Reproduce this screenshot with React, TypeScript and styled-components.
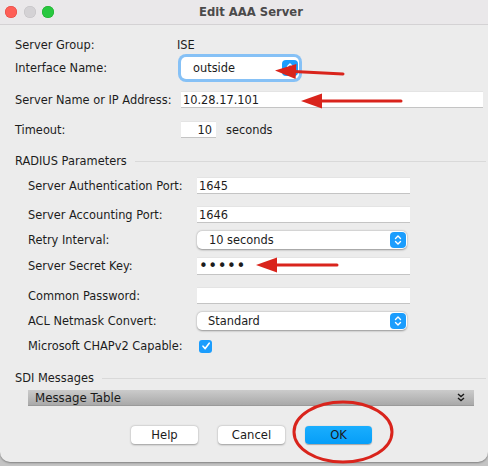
import React from "react";
import styled, { createGlobalStyle } from "styled-components";

const GlobalStyle = createGlobalStyle`
  html, body {
    margin: 0;
    padding: 0;
    background: #c4c4c4;
  }
  body {
    font-family: "DejaVu Sans", "Liberation Sans", sans-serif;
    font-size: 11.4px;
    color: #1c1c1c;
  }
`;

const Page = styled.div`
  position: relative;
  width: 488px;
  height: 466px;
  overflow: hidden;
`;

const Window = styled.div`
  height: 462px;
  background: #ececec;
  border-bottom-left-radius: 10px;
  border-bottom-right-radius: 10px;
  box-shadow: 0 1px 2px rgba(0, 0, 0, 0.35);
  display: flex;
  flex-direction: column;
`;

const TitleBar = styled.div`
  height: 24px;
  flex: none;
  display: flex;
  align-items: center;
  background: #eae8ea;
  border-bottom: 1px solid #d4d2d4;
`;

const Lights = styled.div`
  display: flex;
  gap: 6.5px;
  padding-left: 5px;
  width: 49px;
`;

const Light = styled.span<{ $c: string; $b: string }>`
  width: 12px;
  height: 12px;
  border-radius: 50%;
  background: ${(p) => p.$c};
  box-shadow: inset 0 0 0 0.5px ${(p) => p.$b};
`;

const Title = styled.div`
  flex: 1;
  text-align: center;
  padding-right: 40px;
  font-weight: bold;
  font-size: 11.6px;
  color: #4b4a4b;
`;

const Body = styled.div`
  padding: 8px 5px 0 15px;
  display: flex;
  flex-direction: column;
`;

const Row = styled.div<{ $h: number; $mt?: number; $indent?: number }>`
  display: flex;
  align-items: center;
  height: ${(p) => p.$h}px;
  margin-top: ${(p) => p.$mt ?? 0}px;
  padding-left: ${(p) => p.$indent ?? 0}px;
`;

const Label = styled.span<{ $w: number }>`
  width: ${(p) => p.$w}px;
  flex: none;
  white-space: nowrap;
`;

const TextField = styled.div<{ $w?: number; $align?: string }>`
  height: 100%;
  ${(p) => (p.$w ? `width: ${p.$w}px; flex: none;` : "flex: 1;")}
  box-sizing: border-box;
  background: #fff;
  border-top: 1px solid #e4e4e4;
  border-bottom: 1px solid #c4c4c4;
  display: flex;
  align-items: center;
  justify-content: ${(p) => p.$align ?? "flex-start"};
  padding: 0 4px 0 2px;
  white-space: nowrap;
`;

const Dots = styled.span`
  font-size: 15px;
  letter-spacing: 0.5px;
  line-height: 1;
`;

const Select = styled.div<{ $w: number; $pl: number }>`
  width: ${(p) => p.$w}px;
  height: 100%;
  box-sizing: border-box;
  background: #fff;
  border-radius: 5px;
  box-shadow: 0 0.5px 2px rgba(0, 0, 0, 0.38);
  display: flex;
  align-items: center;
  justify-content: space-between;
  padding: 0 1px 0 ${(p) => p.$pl}px;
`;

const FocusSelect = styled(Select)`
  box-shadow: 0 0 0 3px #86c1f6, 0 0 0 1px #5aa8f0;
`;

const Stepper = styled.span`
  width: 16px;
  height: 16px;
  border-radius: 4px;
  background: #1b9dfd;
  display: flex;
  align-items: center;
  justify-content: center;
`;

const Unit = styled.span`
  margin-left: 10px;
`;

const Section = styled.div<{ $mt: number }>`
  display: flex;
  align-items: center;
  height: 18px;
  margin-top: ${(p) => p.$mt}px;
  margin-right: -3px;
`;

const SectionLine = styled.span`
  flex: 1;
  height: 1px;
  margin-left: 8px;
  background: #d9d9d9;
`;

const Check = styled.span`
  width: 13px;
  height: 13px;
  margin-left: 2px;
  border-radius: 3px;
  background: #1b9dfd;
  display: flex;
  align-items: center;
  justify-content: center;
`;

const TableBar = styled.div`
  height: 16px;
  margin: 3px 9px 0 13px;
  background: linear-gradient(#cbcbcb, #a9a9a9);
  border-bottom: 1px solid #9a9a9a;
  box-sizing: border-box;
  display: flex;
  align-items: center;
  justify-content: space-between;
  padding: 0 9px 0 7px;
  color: #1a1a1a;
  font-size: 11.8px;
`;

const Buttons = styled.div`
  display: flex;
  justify-content: center;
  gap: 20px;
  margin-top: 20px;
  padding-left: 5px;
`;

const Button = styled.button<{ $primary?: boolean }>`
  width: 67px;
  height: 18px;
  border: none;
  border-radius: 4px;
  font-family: inherit;
  font-size: 11.6px;
  padding: 0;
  color: #1a1a1a;
  background: ${(p) => (p.$primary ? "linear-gradient(#1aaefe, #069ef8)" : "#fff")};
  box-shadow: ${(p) =>
    p.$primary ? "0 0.5px 1px rgba(0,0,0,0.3)" : "0 0.5px 2px rgba(0,0,0,0.35)"};
`;

const Overlay = styled.svg`
  position: absolute;
  left: 0;
  top: 0;
  pointer-events: none;
`;

const StepIcon = () => (
  <svg width="10" height="12" viewBox="0 0 10 12">
    <path d="M2.5 4.5 L5 2 L7.5 4.5 M2.5 7.5 L5 10 L7.5 7.5" fill="none" stroke="#fff" strokeWidth="1.4" strokeLinecap="round" strokeLinejoin="round" />
  </svg>
);

const TickIcon = () => (
  <svg width="10" height="10" viewBox="0 0 10 10">
    <path d="M2 5.2 L4.2 7.6 L8.2 2.2" fill="none" stroke="#fff" strokeWidth="1.6" strokeLinecap="round" strokeLinejoin="round" />
  </svg>
);

const DoubleChevron = () => (
  <svg width="8" height="9" viewBox="0 0 8 9">
    <path d="M1 1 L4 3.5 L7 1 M1 5 L4 7.5 L7 5" fill="none" stroke="#1a1a1a" strokeWidth="1.4" />
  </svg>
);

const RED = "#d9241c";

const Arrow = ({ x1, y1, x2, y2 }: { x1: number; y1: number; x2: number; y2: number }) => {
  // x2,y2 is the tip
  const dx = x2 - x1;
  const dy = y2 - y1;
  const len = Math.hypot(dx, dy);
  const ux = dx / len;
  const uy = dy / len;
  const hl = 21;
  const hw = 7.5;
  const bx = x2 - ux * hl;
  const by = y2 - uy * hl;
  const pts = `${x2},${y2} ${bx - uy * hw},${by + ux * hw} ${bx + uy * hw},${by - ux * hw}`;
  return (
    <g>
      <line x1={x1} y1={y1} x2={bx + ux * 2} y2={by + uy * 2} stroke={RED} strokeWidth={3} strokeLinecap="round" />
      <polygon points={pts} fill={RED} />
    </g>
  );
};

export default function App() {
  return (
    <Page>
      <GlobalStyle />
      <Window>
        <TitleBar>
          <Lights>
            <Light $c="#fe5f57" $b="#e0443e" />
            <Light $c="#d4d2d5" $b="#c2c0c3" />
            <Light $c="#29c840" $b="#1aab29" />
          </Lights>
          <Title>Edit AAA Server</Title>
        </TitleBar>
        <Body>
          <Row $h={24}>
            <Label $w={162}>Server Group:</Label>
            <span>ISE</span>
          </Row>
          <Row $h={22}>
            <Label $w={166}>Interface Name:</Label>
            <FocusSelect $w={118} $pl={12}>
              outside
              <Stepper>
                <StepIcon />
              </Stepper>
            </FocusSelect>
          </Row>
          <Row $h={17} $mt={12}>
            <Label $w={166}>Server Name or IP Address:</Label>
            <TextField>10.28.17.101</TextField>
          </Row>
          <Row $h={17} $mt={13}>
            <Label $w={166}>Timeout:</Label>
            <TextField $w={35} $align="flex-end">10</TextField>
            <Unit>seconds</Unit>
          </Row>

          <Section $mt={14}>
            RADIUS Parameters
            <SectionLine />
          </Section>
          <Row $h={17} $mt={7} $indent={13}>
            <Label $w={169}>Server Authentication Port:</Label>
            <TextField $w={213}>1645</TextField>
          </Row>
          <Row $h={17} $mt={12} $indent={13}>
            <Label $w={169}>Server Accounting Port:</Label>
            <TextField $w={213}>1646</TextField>
          </Row>
          <Row $h={18} $mt={8} $indent={13}>
            <Label $w={169}>Retry Interval:</Label>
            <Select $w={210} $pl={12}>
              10 seconds
              <Stepper>
                <StepIcon />
              </Stepper>
            </Select>
          </Row>
          <Row $h={18} $mt={8} $indent={13}>
            <Label $w={169}>Server Secret Key:</Label>
            <TextField $w={213}>
              <Dots>•••••</Dots>
            </TextField>
          </Row>
          <Row $h={17} $mt={12} $indent={13}>
            <Label $w={169}>Common Password:</Label>
            <TextField $w={213} />
          </Row>
          <Row $h={18} $mt={8} $indent={13}>
            <Label $w={169}>ACL Netmask Convert:</Label>
            <Select $w={210} $pl={11}>
              Standard
              <Stepper>
                <StepIcon />
              </Stepper>
            </Select>
          </Row>
          <Row $h={14} $mt={9} $indent={13}>
            <Label $w={169}>Microsoft CHAPv2 Capable:</Label>
            <Check>
              <TickIcon />
            </Check>
          </Row>

          <Section $mt={16}>
            SDI Messages
            <SectionLine />
          </Section>
          <TableBar>
            Message Table
            <DoubleChevron />
          </TableBar>

          <Buttons>
            <Button>Help</Button>
            <Button>Cancel</Button>
            <Button $primary>OK</Button>
          </Buttons>
        </Body>
      </Window>

      <Overlay width="488" height="466" viewBox="0 0 488 466">
        <Arrow x1={343} y1={74} x2={275} y2={70.5} />
        <Arrow x1={401} y1={101} x2={301} y2={101} />
        <Arrow x1={337} y1={265} x2={256} y2={265} />
        <ellipse cx={343} cy={432} rx={49} ry={30} fill="none" stroke={RED} strokeWidth={3} />
      </Overlay>
    </Page>
  );
}
